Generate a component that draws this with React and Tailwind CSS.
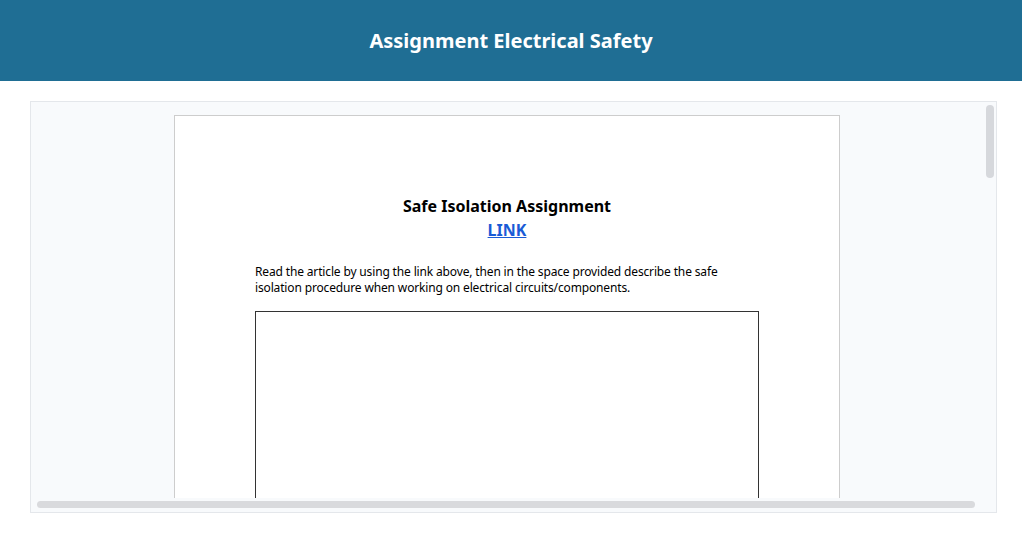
export default function App() {
  const font = { fontFamily: '"Noto Sans", "Open Sans", sans-serif' };

  return (
    <div className="min-h-screen bg-white" style={font}>
      <header className="h-[81px] bg-[#1f6e94] flex items-center justify-center">
        <h1 className="text-[20px] font-bold text-white">Assignment Electrical Safety</h1>
      </header>

      <div className="pl-[30px] pr-[25px] pt-[20px]">
        <div className="relative h-[412px] border border-[#e4e7eb] bg-[#f8fafc] overflow-hidden">
          <div className="h-[396px] overflow-hidden pt-[13px] pl-[143px]">
            <div className="w-[666px] h-[420px] border border-[#cdcdcd] bg-white px-[80px] pt-[78px]">
              <h2 className="text-center text-[16px] leading-6 font-bold text-black">Safe Isolation Assignment</h2>
              <div className="text-center">
                <a href="#" className="text-[16px] leading-6 font-bold text-[#1a5bd6] underline">LINK</a>
              </div>
              <p className="mt-[22px] text-[12px] leading-4 tracking-[-0.15px] text-black">
                Read the article by using the link above, then in the space provided describe the safe
                isolation procedure when working on electrical circuits/components.
              </p>
              <div className="mt-[15px] h-[300px] border border-[#333]"></div>
            </div>
          </div>

          {/* scrollbars */}
          <div className="absolute right-[2px] top-[3px] w-[8px] h-[73px] rounded-full bg-[#d6d8dc]"></div>
          <div className="absolute left-[6px] right-[21px] bottom-[4px] h-[7px] rounded-full bg-[#d9dadd]"></div>
        </div>
      </div>
    </div>
  );
}
